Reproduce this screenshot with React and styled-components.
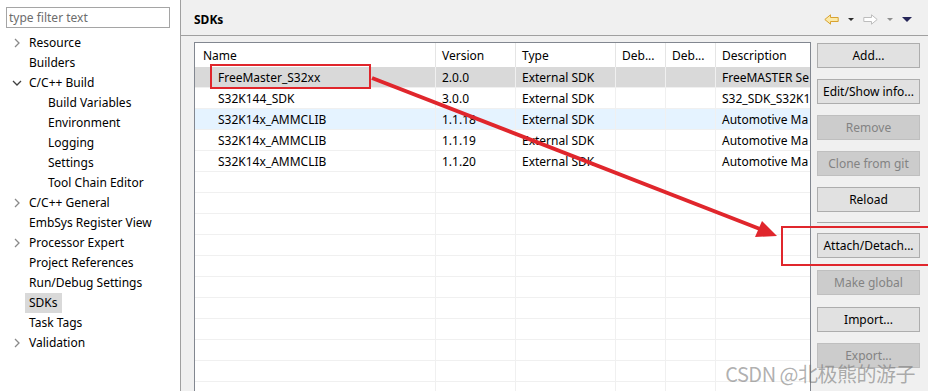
import React from 'react';
import styled, { createGlobalStyle } from 'styled-components';

const GlobalStyle = createGlobalStyle`
	html, body { margin: 0; padding: 0; }
	body {
		font-family: "Noto Sans", "Noto Sans CJK SC", sans-serif;
		font-size: 12px;
		color: #000;
		background: #f0f0f0;
	}
`;

const Page = styled.div`
	position: relative;
	display: flex;
	width: 928px;
	height: 391px;
	overflow: hidden;
`;

const Sidebar = styled.aside`
	flex: none;
	width: 181px;
	box-sizing: border-box;
	padding: 7px 0 0 6px;
	background: #fff;
	border-right: 1px solid #a0a0a0;
`;

const Filter = styled.input`
	display: block;
	width: 164px;
	height: 21px;
	box-sizing: border-box;
	margin: 0;
	padding: 0 2px;
	border: 1px solid #a5a5a5;
	font: inherit;
	outline: none;
	&::placeholder { color: #6d6d6d; }
`;

const Tree = styled.ul`
	list-style: none;
	margin: 5px 0 0;
	padding: 0;
`;

const TreeRow = styled.li`
	display: flex;
	align-items: center;
	height: 20px;
	padding-left: ${p => 6 + p.$level * 19}px;
`;

const Twisty = styled.span`
	flex: none;
	width: 13px;
	height: 20px;
	display: flex;
	align-items: center;
`;

const TreeLabel = styled.span`
	height: 20px;
	line-height: 20px;
	padding: 0 4px;
	white-space: nowrap;
	background: ${p => p.$selected ? '#d9d9d9' : 'transparent'};
`;

const Main = styled.main`
	flex: 1;
	min-width: 0;
	display: flex;
	flex-direction: column;
	background: #f0f0f0;
`;

const Header = styled.header`
	flex: none;
	height: 36px;
	box-sizing: border-box;
	display: flex;
	align-items: center;
	justify-content: space-between;
	padding: 4px 16px 0 13px;
	border-bottom: 1px solid #a0a0a0;
`;

const Title = styled.h1`
	margin: 0;
	font-size: 12px;
	font-weight: 700;
`;

const Toolbar = styled.div`
	display: flex;
	align-items: center;
	gap: 9px;
`;

const Body = styled.div`
	flex: 1;
	min-height: 0;
	display: flex;
	align-items: flex-start;
	padding: 6px 0 0 13px;
	gap: 6px;
`;

const TableFrame = styled.div`
	flex: none;
	width: 617px;
	height: 360px;
	box-sizing: border-box;
	background: #fff;
	border: 1px solid #828790;
	border-bottom: none;
	overflow: hidden;
`;

const Row = styled.div`
	display: grid;
	grid-template-columns: 241px 80px 100px 50px 50px 1fr;
	height: ${p => p.$head ? 24 : 21}px;
	box-sizing: border-box;
	border-bottom: ${p => p.$head ? 'none' : '1px solid #f0f0f0'};
	background: ${p => p.$tone === 'selected' ? '#d9d9d9' : p.$tone === 'hover' ? '#e5f3ff' : '#fff'};
`;

const Cell = styled.div`
	display: flex;
	align-items: center;
	min-width: 0;
	overflow: hidden;
	white-space: nowrap;
	padding-left: ${p => p.$indent ?? 6}px;
	border-right: 1px solid ${p => p.$head ? '#e5e5e5' : '#f0f0f0'};
	&:last-child { border-right: none; }
`;

const Buttons = styled.div`
	flex: none;
	width: 103px;
	display: flex;
	flex-direction: column;
	gap: 11px;
	padding-top: 1px;
`;

const Button = styled.button`
	height: 25px;
	margin: 0;
	margin-top: ${p => p.$extra ?? 0}px;
	padding: 0;
	font: inherit;
	color: ${p => p.disabled ? '#838383' : '#000'};
	background: ${p => p.disabled ? '#cccccc' : '#e1e1e1'};
	border: 1px solid ${p => p.disabled ? '#bfbfbf' : '#adadad'};
`;

const Separator = styled.hr`
	margin: -1px 0;
	height: 0;
	border: none;
	border-top: 1px solid #a9a9a9;
`;

const Overlay = styled.svg`
	position: absolute;
	left: 0;
	top: 0;
	pointer-events: none;
`;

const Watermark = styled.div`
	position: absolute;
	right: 13px;
	bottom: 3px;
	font-family: "Noto Sans CJK SC", sans-serif;
	font-size: 20px;
	letter-spacing: -0.5px;
	color: rgba(110, 110, 110, 0.55);
	pointer-events: none;
`;

const tree = [
	{ label: 'Resource', level: 0, twisty: 'closed' },
	{ label: 'Builders', level: 0 },
	{ label: 'C/C++ Build', level: 0, twisty: 'open' },
	{ label: 'Build Variables', level: 1 },
	{ label: 'Environment', level: 1 },
	{ label: 'Logging', level: 1 },
	{ label: 'Settings', level: 1 },
	{ label: 'Tool Chain Editor', level: 1 },
	{ label: 'C/C++ General', level: 0, twisty: 'closed' },
	{ label: 'EmbSys Register View', level: 0 },
	{ label: 'Processor Expert', level: 0, twisty: 'closed' },
	{ label: 'Project References', level: 0 },
	{ label: 'Run/Debug Settings', level: 0 },
	{ label: 'SDKs', level: 0, selected: true },
	{ label: 'Task Tags', level: 0 },
	{ label: 'Validation', level: 0, twisty: 'closed' },
];

const sdks = [
	{ name: 'FreeMaster_S32xx', version: '2.0.0', desc: 'FreeMASTER Se', tone: 'selected' },
	{ name: 'S32K144_SDK', version: '3.0.0', desc: 'S32_SDK_S32K1' },
	{ name: 'S32K14x_AMMCLIB', version: '1.1.18', desc: 'Automotive Ma', tone: 'hover' },
	{ name: 'S32K14x_AMMCLIB', version: '1.1.19', desc: 'Automotive Ma' },
	{ name: 'S32K14x_AMMCLIB', version: '1.1.20', desc: 'Automotive Ma' },
];

const Chevron = ({ open }) => (
	<svg width="10" height="10" viewBox="0 0 10 10">
		<polyline
			points={open ? '1,3 5,7 9,3' : '3,1 7,5 3,9'}
			fill="none"
			stroke={open ? '#404040' : '#8a8a8a'}
			strokeWidth="1.3"
		/>
	</svg>
);

const NavArrow = ({ flip, fill, stroke }) => (
	<svg width="15" height="11" viewBox="0 0 15 11" style={flip ? { transform: 'scaleX(-1)' } : undefined}>
		<polygon points="0.8,5.5 6.5,0.8 6.5,3.5 14.2,3.5 14.2,7.5 6.5,7.5 6.5,10.2" fill={fill} stroke={stroke} strokeWidth="1" strokeLinejoin="round" />
	</svg>
);

const Caret = ({ w = 6, h = 3, color }) => (
	<svg width={w} height={h} viewBox={`0 0 ${w} ${h}`}>
		<polygon points={`0,0 ${w},0 ${w / 2},${h}`} fill={color} />
	</svg>
);

const App = () => {
	const blanks = Array.from({ length: 12 });

	return (
		<Page>
			<GlobalStyle />
			<Sidebar>
				<Filter placeholder="type filter text" />
				<Tree>
					{tree.map(item => (
						<TreeRow key={item.label} $level={item.level}>
							<Twisty>{item.twisty && <Chevron open={item.twisty === 'open'} />}</Twisty>
							<TreeLabel $selected={item.selected}>{item.label}</TreeLabel>
						</TreeRow>
					))}
				</Tree>
			</Sidebar>

			<Main>
				<Header>
					<Title>SDKs</Title>
					<Toolbar>
						<NavArrow fill="#fbe9a8" stroke="#d8a230" />
						<Caret color="#2b2b2b" />
						<NavArrow flip fill="#ffffff" stroke="#bdbdbd" />
						<Caret color="#8f8f8f" />
						<Caret w={10} h={5} color="#262659" />
					</Toolbar>
				</Header>

				<Body>
					<TableFrame>
						<Row $head>
							<Cell $head $indent={8}>Name</Cell>
							<Cell $head>Version</Cell>
							<Cell $head>Type</Cell>
							<Cell $head>Deb...</Cell>
							<Cell $head>Deb...</Cell>
							<Cell $head>Description</Cell>
						</Row>
						{sdks.map((sdk, i) => (
							<Row key={i} $tone={sdk.tone}>
								<Cell $indent={23}>{sdk.name}</Cell>
								<Cell>{sdk.version}</Cell>
								<Cell>External SDK</Cell>
								<Cell />
								<Cell />
								<Cell>{sdk.desc}</Cell>
							</Row>
						))}
						{blanks.map((_, i) => (
							<Row key={`b${i}`}>
								<Cell /><Cell /><Cell /><Cell /><Cell /><Cell />
							</Row>
						))}
					</TableFrame>

					<Buttons>
						<Button>Add...</Button>
						<Button>Edit/Show info...</Button>
						<Button disabled>Remove</Button>
						<Button disabled>Clone from git</Button>
						<Button>Reload</Button>
						<Separator />
						<Button>Attach/Detach...</Button>
						<Button disabled $extra={1}>Make global</Button>
						<Button $extra={1}>Import...</Button>
						<Button disabled>Export...</Button>
					</Buttons>
				</Body>
			</Main>

			<Overlay width="928" height="391" viewBox="0 0 928 391">
				<rect x="211" y="65" width="159" height="23" fill="none" stroke="#e0262c" strokeWidth="2" />
				<line x1="372" y1="78" x2="760" y2="229" stroke="#e0262c" strokeWidth="4" />
				<polygon points="777,236 755,237 762,221" fill="#e0262c" />
				<rect x="782" y="227" width="160" height="38" fill="none" stroke="#e0262c" strokeWidth="2" />
			</Overlay>
			<Watermark>CSDN @北极熊的游子</Watermark>
		</Page>
	);
};

export default App;
